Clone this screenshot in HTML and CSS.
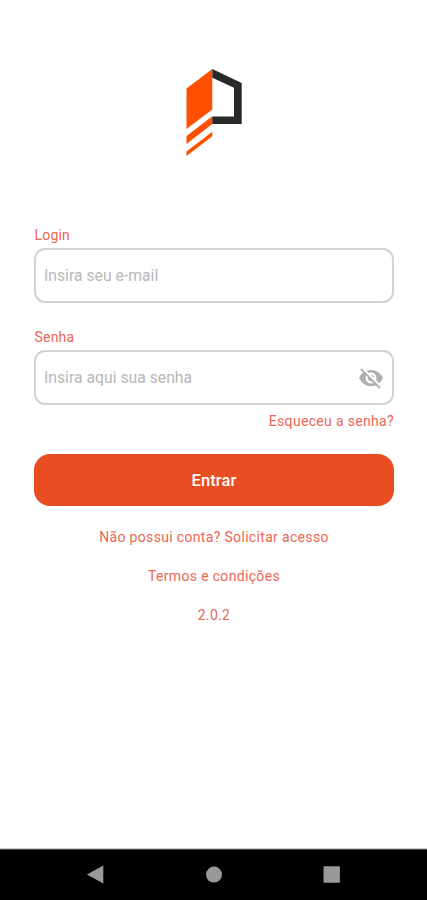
FILE: index.html
```html
<!DOCTYPE html>
<html lang="pt-BR">
	<head>
		<meta charset="utf-8">
		<meta name="viewport" content="width=device-width, initial-scale=1">
		<title>Login</title>
		<link rel="stylesheet" href="styles.css">
	</head>
	<body>
		<main class="screen">
			<svg class="logo" viewBox="0 0 56 88" width="56" height="88">
				<path fill="#ff5000" d="M0.5 20.5 26.3 1V41.5L0.5 61zM0.5 68 26.3 48.3V56L0.5 76zM0.5 83.5 26.3 63.8V68.3L0.5 88z"/>
				<path fill="#292b2b" d="M26.3 1 55.7 15V56H26.3V48.5H48V19.7L26.3 9.7z"/>
			</svg>
			<form class="form">
				<label class="label" for="email">Login</label>
				<div class="field">
					<input class="input" id="email" type="text" placeholder="Insira seu e-mail">
				</div>
				<label class="label" for="password">Senha</label>
				<div class="field">
					<input class="input" id="password" type="password" placeholder="Insira aqui sua senha">
					<svg class="eye" viewBox="0 0 24 24" width="26" height="26">
						<path d="M12 7c2.76 0 5 2.24 5 5 0 .65-.13 1.26-.36 1.83l2.92 2.92c1.51-1.26 2.7-2.89 3.43-4.75-1.73-4.39-6-7.5-11-7.5-1.4 0-2.74.25-3.98.7l2.16 2.16C10.74 7.13 11.35 7 12 7zM2 4.27l2.28 2.28.46.46C3.08 8.3 1.78 10.02 1 12c1.73 4.39 6 7.5 11 7.5 1.55 0 3.03-.3 4.38-.84l.42.42L19.73 22 21 20.73 3.27 3 2 4.27zM7.53 9.8l1.55 1.55c-.05.21-.08.43-.08.65 0 1.66 1.34 3 3 3 .22 0 .44-.03.65-.08l1.55 1.55c-.67.33-1.41.53-2.2.53-2.76 0-5-2.24-5-5 0-.79.2-1.53.53-2.2zm4.31-.78l3.15 3.15.02-.16c0-1.66-1.34-3-3-3l-.17.01z"/>
					</svg>
				</div>
				<a class="link forgot">Esqueceu a senha?</a>
				<button class="submit" type="button">Entrar</button>
			</form>
			<div class="links">
				<a class="link">Não possui conta? Solicitar acesso</a>
				<a class="link">Termos e condições</a>
				<span class="link">2.0.2</span>
			</div>
		</main>
		<nav class="navbar">
			<svg viewBox="0 0 18 20" width="18" height="20"><path d="M1 9.5 17.3 0.5V18.5z"/></svg>
			<svg viewBox="0 0 18 20" width="18" height="20"><circle cx="9" cy="9.6" r="8"/></svg>
			<svg viewBox="0 0 18 20" width="18" height="20"><rect x="0.5" y="1.2" width="16.4" height="16.6" rx="1"/></svg>
		</nav>
	</body>
</html>
```
FILE: styles.css
```css
* {
	box-sizing: border-box;
}
body {
	margin: 0;
	height: 900px;
	display: flex;
	flex-direction: column;
	font-family: Roboto, "Liberation Sans", sans-serif;
	background: #fff;
	overflow: hidden;
}
.screen {
	flex: 1;
	display: flex;
	flex-direction: column;
	padding: 68px 33px 0 34px;
}
.logo {
	display: block;
	margin-left: 152px;
}
.form {
	display: flex;
	flex-direction: column;
	margin-top: 69px;
}
.label, .link {
	font-size: 14px;
	line-height: 20px;
	color: #ec6654;
}
.label {
	margin-bottom: 3px;
	padding-left: 0.5px;
	letter-spacing: 0.2px;
}
.field {
	display: flex;
	align-items: center;
	height: 55px;
	margin-bottom: 24px;
	padding: 0 8px;
	border: 2px solid #d2d2d2;
	border-radius: 11px;
}
.input {
	flex: 1;
	min-width: 0;
	padding: 0;
	border: 0;
	outline: 0;
	font: 15.75px Roboto, "Liberation Sans", sans-serif;
	background: transparent;
}
.input::placeholder {
	color: #b8b8b8;
}
.eye {
	fill: #b0b0b0;
}
.link {
	letter-spacing: 0.33px;
}
.forgot {
	align-self: flex-end;
	margin-top: -18px;
}
.submit {
	height: 52px;
	margin-top: 23px;
	padding: 0;
	border: 0;
	border-radius: 16px;
	font: 500 16.5px Roboto, "Liberation Sans", sans-serif;
	letter-spacing: 0.1px;
	color: #fff;
	background: #e94e22;
}
.links {
	display: flex;
	flex-direction: column;
	align-items: center;
	gap: 19px;
	margin-top: 21px;
}
.navbar {
	display: flex;
	justify-content: space-between;
	align-items: center;
	height: 52px;
	padding: 0 86px;
	border-top: 1px solid #ccc;
	background: #000;
	fill: #999;
	box-shadow: inset 0 1px #444;
}
```
